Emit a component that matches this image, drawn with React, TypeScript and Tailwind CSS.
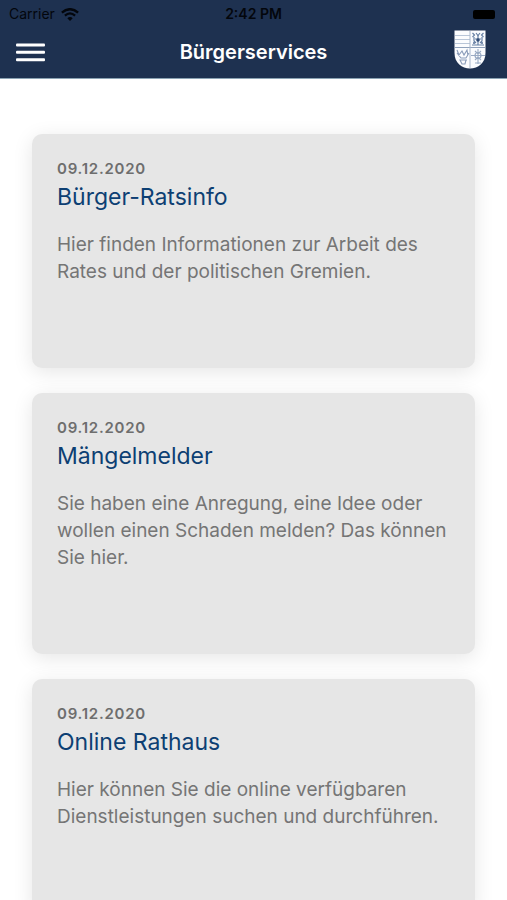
interface Service {
  date: string
  title: string
  description: string
}

const SERVICES: Service[] = [
  {
    date: '09.12.2020',
    title: 'Bürger-Ratsinfo',
    description: 'Hier finden Informationen zur Arbeit des Rates und der politischen Gremien.',
  },
  {
    date: '09.12.2020',
    title: 'Mängelmelder',
    description:
      'Sie haben eine Anregung, eine Idee oder wollen einen Schaden melden? Das können Sie hier.',
  },
  {
    date: '09.12.2020',
    title: 'Online Rathaus',
    description: 'Hier können Sie die online verfügbaren Dienstleistungen suchen und durchführen.',
  },
]

function WifiIcon() {
  return (
    <svg viewBox="0 0 18 13" className="h-[13px] w-[18px]" aria-hidden="true">
      <path d="M9 13 L6.3 10.2 Q9 8 11.7 10.2 Z" fill="#03060c" />
      <path d="M3.9 7.6 Q9 3.2 14.1 7.6" fill="none" stroke="#03060c" strokeWidth="2.3" />
      <path d="M0.9 4.6 Q9 -2.2 17.1 4.6" fill="none" stroke="#03060c" strokeWidth="2.4" />
    </svg>
  )
}

function MenuIcon() {
  return (
    <svg viewBox="0 0 29 19" className="h-[19px] w-[29px]" aria-hidden="true">
      <g fill="#fff">
        <rect y="0.5" width="29" height="3" rx="1" />
        <rect y="7.8" width="29" height="3" rx="1" />
        <rect y="15.2" width="29" height="3" rx="1" />
      </g>
    </svg>
  )
}

function CrestIcon() {
  return (
    <svg viewBox="0 0 32 39" className="h-[39px] w-8" aria-hidden="true">
      <path d="M.5 .5 H31.5 V23 C31.5 33 24 38.5 16 38.5 C8 38.5 .5 33 .5 23 Z" fill="#fbfcfe" />
      <g stroke="#b9c6d8" strokeWidth="1">
        <path d="M1 5.5 H16 M1 9.5 H16 M1 13.5 H16" />
        <path d="M1 17.5 H31" stroke="#8fa1bb" />
        <path d="M16 1 V38" stroke="#a9b8cd" />
      </g>
      {/* upper right field */}
      <g fill="none" stroke="#6780a4" strokeWidth="1.2">
        <path d="M18.5 3 L20.5 5 L18.5 7 M29.5 3 L27.5 5 L29.5 7 M22 3 L24 5.5 L26 3" />
        <path d="M24 5 V15 M20 7 V11 L22 13 M28 7 V11 L26 13 M18 15 H30 M21 9 H27" />
      </g>
      <circle cx="24" cy="10" r="1.8" fill="#2f4b76" />
      <circle cx="20" cy="13" r="1" fill="#546f97" />
      <circle cx="28" cy="13" r="1" fill="#546f97" />
      {/* lower left field */}
      <g fill="none" stroke="#8a9cb9" strokeWidth="1.1">
        <path d="M3 20 L5 25 L8 21 L10 25 L13 20 L14 26 M3 23 L7 28 H12 L15 23" />
        <path d="M6 30 L8 34 H11 L12 30 Z M6 30 H13" />
      </g>
      {/* lower right field */}
      <g fill="none" stroke="#9aabc4" strokeWidth="1.1">
        <path d="M24 19 V34 M17 25.5 H31 M21 21 L24 24 L27 21 M21 30 L24 27 L27 30 M21 33 H27" />
        <circle cx="24" cy="25.5" r="3" />
      </g>
    </svg>
  )
}

function ServiceCard({ date, title, description }: Service) {
  return (
    <a
      href="#"
      className="block rounded-[10px] bg-[#e6e6e6] px-[25px] pt-6 pb-[83px] shadow-[0_4px_20px_rgba(0,0,0,0.1)]"
    >
      <p className="text-[15px] leading-[21px] font-semibold tracking-wider text-[#6e6e6e]">{date}</p>
      <h2 className="text-[23px] leading-9 text-[#0d3f73]">{title}</h2>
      <p className="mt-4 text-[19px] leading-[27px] text-[#757575]">{description}</p>
    </a>
  )
}

export default function App() {
  return (
    <div className="min-h-screen bg-white font-['Inter',sans-serif]">
      <header className="border-b border-[#8ba3b3] bg-[#1e3150]">
        <div className="grid h-7 grid-cols-3 items-center px-[9px] text-sm text-[#03060c]">
          <div className="flex items-center gap-[6px]">
            <span>Carrier</span>
            <WifiIcon />
          </div>
          <span className="text-center font-semibold">2:42 PM</span>
          <div className="flex justify-end pr-[3px]">
            <div className="h-[9px] w-[22px] rounded-xs bg-black" />
          </div>
        </div>
        <div className="grid grid-cols-[1fr_auto_1fr] items-center px-4 pt-[2px] pb-1">
          <button type="button" aria-label="Menü" className="flex h-11 w-11 items-center">
            <MenuIcon />
          </button>
          <h1 className="text-xl font-semibold text-white">Bürgerservices</h1>
          <div className="-mt-1.5 flex justify-end pr-[5px]">
            <CrestIcon />
          </div>
        </div>
      </header>

      <main className="flex flex-col gap-[25px] px-8 pt-[55px] pb-8">
        {SERVICES.map(service => (
          <ServiceCard key={service.title} {...service} />
        ))}
      </main>
    </div>
  )
}
